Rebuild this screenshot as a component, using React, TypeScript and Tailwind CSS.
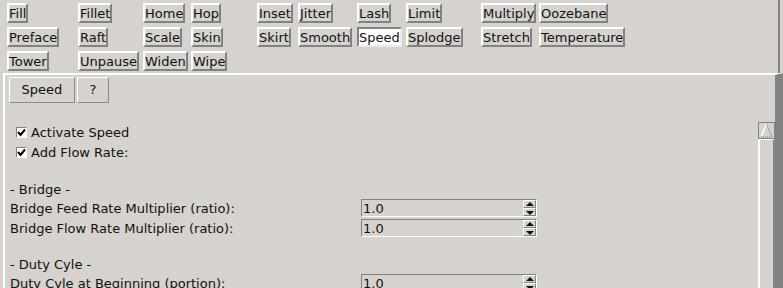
import React from "react";

const BG = "bg-[#d6d2ce]";

function TopBtn({ label, selected }: { label: string; selected?: boolean }) {
  if (selected) {
    return (
      <div className="justify-self-start h-[20px] flex items-center border-2 border-t-[#828282] border-l-[#828282] border-r-[#ecebe9] border-b-[#ecebe9] bg-white leading-none whitespace-nowrap">
        {label}
      </div>
    );
  }
  return (
    <div className="justify-self-start h-[20px] flex items-center border-2 border-t-white border-l-white border-r-[#828282] border-b-[#828282] leading-none whitespace-nowrap">
      {label}
    </div>
  );
}

const row1 = ["Fill", "Fillet", "Home", "Hop", "Inset", "Jitter", "Lash", "Limit", "Multiply", "Oozebane"];
const row2 = ["Preface", "Raft", "Scale", "Skin", "Skirt", "Smooth", "Speed", "Splodge", "Stretch", "Temperature"];
const row3 = ["Tower", "Unpause", "Widen", "Wipe"];

function Check({ label }: { label: string }) {
  return (
    <div className="shrink-0 h-[20px] flex items-center pl-[11px]">
      <div className="w-[11px] h-[11px] bg-white border border-t-[#828282] border-l-[#828282] border-r-white border-b-white flex items-center justify-center">
        <svg width="9" height="9" viewBox="0 0 9 9">
          <path d="M1 4 L3.5 7 L8 1.5" stroke="#000" strokeWidth="2" fill="none" />
        </svg>
      </div>
      <span className="ml-[4px] leading-none">{label}</span>
    </div>
  );
}

function Spin({ label }: { label: string }) {
  return (
    <div className="shrink-0 h-[20px] flex items-center pl-[5px]">
      <div className="w-[351px] leading-none whitespace-nowrap">{label}</div>
      <div className="w-[176px] h-[18px] flex border border-t-[#828282] border-l-[#828282] border-r-white border-b-white">
        <div className="flex-1 flex items-center pl-[1px] leading-none">1.0</div>
        <div className="w-[13px] flex flex-col">
          <div className="h-[8px] flex items-center justify-center border border-t-white border-l-white border-r-[#828282] border-b-[#828282]">
            <svg width="8" height="5" viewBox="0 0 8 5">
              <polygon points="4,0 8,4 0,4" fill="#111" />
            </svg>
          </div>
          <div className="h-[8px] flex items-center justify-center border border-t-white border-l-white border-r-[#828282] border-b-[#828282]">
            <svg width="8" height="5" viewBox="0 0 8 5">
              <polygon points="0,1 8,1 4,5" fill="#111" />
            </svg>
          </div>
        </div>
      </div>
    </div>
  );
}

function Label({ text }: { text: string }) {
  return <div className="shrink-0 h-[18px] flex items-center pl-[5px] leading-none whitespace-nowrap">{text}</div>;
}

export default function App() {
  return (
    <div className={`w-[783px] h-[288px] overflow-hidden ${BG} text-[13px] text-[#111] font-['DejaVu_Sans',sans-serif] flex flex-col`}>
      <div className="shrink-0 w-[780px] h-[73px] border-r-2 border-r-[#828282] pl-[7px] pt-[3px]">
        <div className="grid grid-cols-[71px_65px_48px_66px_41px_59px_49px_75px_58px_100px] gap-y-[4px]">
          {row1.map((l) => (
            <TopBtn key={"a" + l} label={l} />
          ))}
          {row2.map((l) => (
            <TopBtn key={"b" + l} label={l} selected={l === "Speed"} />
          ))}
          {row3.map((l) => (
            <TopBtn key={"c" + l} label={l} />
          ))}
        </div>
      </div>
      <div className="flex-1 ml-[3px] border-t-2 border-l-2 border-t-white border-l-white border-r-[8px] border-r-[#828282] flex flex-col min-h-0">
        <div className="shrink-0 flex pl-[4px] pt-[2px]">
          <div className="w-[66px] h-[26px] flex items-center justify-center border border-t-white border-l-white border-r-[#8a8a8a] border-b-[#8a8a8a]">
            Speed
          </div>
          <div className="ml-[2px] w-[32px] h-[26px] flex items-center justify-center border border-t-white border-l-white border-r-[#8a8a8a] border-b-[#8a8a8a]">
            ?
          </div>
        </div>
        <div className="mt-[19px] flex flex-1 min-h-0">
          <div className="flex-1 flex flex-col">
            <Check label="Activate Speed" />
            <Check label="Add Flow Rate:" />
            <div className="shrink-0 h-[18px]" />
            <Label text="- Bridge -" />
            <Spin label="Bridge Feed Rate Multiplier (ratio):" />
            <Spin label="Bridge Flow Rate Multiplier (ratio):" />
            <div className="shrink-0 h-[17px]" />
            <Label text="- Duty Cyle -" />
            <Spin label="Duty Cyle at Beginning (portion):" />
          </div>
          <div className="w-[17px] flex flex-col">
            <div className="shrink-0 h-[17px] border border-[#828282] flex items-end justify-center">
              <svg width="15" height="15" viewBox="0 0 15 15">
                <path d="M7.5 1 L2 14" stroke="#fff" strokeWidth="1.5" />
                <path d="M7.5 1 L13 14" stroke="#777" strokeWidth="1" strokeDasharray="1 1" />
                <path d="M2 14 L13 14" stroke="#777" strokeWidth="1" strokeDasharray="1 1" />
              </svg>
            </div>
            <div className="flex-1 border-l-2 border-t border-l-white border-t-white border-r-2 border-r-[#828282]" />
          </div>
        </div>
      </div>
    </div>
  );
}
